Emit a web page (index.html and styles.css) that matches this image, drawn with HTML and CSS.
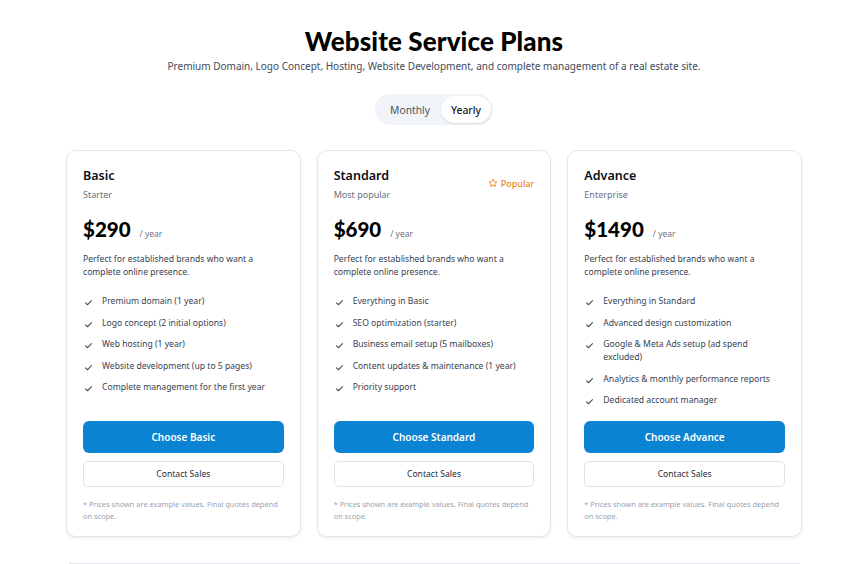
FILE: index.html
```html
<!DOCTYPE html>
<html lang="en">
<head>
<meta charset="utf-8">
<title>Website Service Plans</title>
<link rel="stylesheet" href="styles.css">
</head>
<body>
<main class="page">
  <header class="hero">
    <h1 class="title">Website Service Plans</h1>
    <p class="subtitle">Premium Domain, Logo Concept, Hosting, Website Development, and complete management of a real estate site.</p>
    <div class="toggle">
      <button class="toggle-btn">Monthly</button>
      <button class="toggle-btn active">Yearly</button>
    </div>
  </header>

  <section class="plans">
    <article class="card">
      <div class="card-head">
        <div>
          <h2 class="plan-name">Basic</h2>
          <p class="plan-tag">Starter</p>
        </div>
      </div>
      <div class="price"><span class="amount">$290</span><span class="per">/ year</span></div>
      <p class="desc">Perfect for established brands who want a complete online presence.</p>
      <ul class="features">
        <li><svg class="check" viewBox="0 0 12 12"><path d="M2 6.5l2.6 2.5L10 3.5"/></svg>Premium domain (1 year)</li>
        <li><svg class="check" viewBox="0 0 12 12"><path d="M2 6.5l2.6 2.5L10 3.5"/></svg>Logo concept (2 initial options)</li>
        <li><svg class="check" viewBox="0 0 12 12"><path d="M2 6.5l2.6 2.5L10 3.5"/></svg>Web hosting (1 year)</li>
        <li><svg class="check" viewBox="0 0 12 12"><path d="M2 6.5l2.6 2.5L10 3.5"/></svg>Website development (up to 5 pages)</li>
        <li><svg class="check" viewBox="0 0 12 12"><path d="M2 6.5l2.6 2.5L10 3.5"/></svg>Complete management for the first year</li>
      </ul>
      <div class="actions">
        <button class="btn-primary">Choose Basic</button>
        <button class="btn-secondary">Contact Sales</button>
        <p class="note">* Prices shown are example values. Final quotes depend on scope.</p>
      </div>
    </article>

    <article class="card">
      <div class="card-head">
        <div>
          <h2 class="plan-name">Standard</h2>
          <p class="plan-tag">Most popular</p>
        </div>
        <span class="badge"><svg class="star" viewBox="0 0 24 24"><path d="M12 2.8l2.8 5.9 6.4.8-4.7 4.4 1.2 6.4L12 17.2l-5.7 3.1 1.2-6.4-4.7-4.4 6.4-.8z"/></svg>Popular</span>
      </div>
      <div class="price"><span class="amount">$690</span><span class="per">/ year</span></div>
      <p class="desc">Perfect for established brands who want a complete online presence.</p>
      <ul class="features">
        <li><svg class="check" viewBox="0 0 12 12"><path d="M2 6.5l2.6 2.5L10 3.5"/></svg>Everything in Basic</li>
        <li><svg class="check" viewBox="0 0 12 12"><path d="M2 6.5l2.6 2.5L10 3.5"/></svg>SEO optimization (starter)</li>
        <li><svg class="check" viewBox="0 0 12 12"><path d="M2 6.5l2.6 2.5L10 3.5"/></svg>Business email setup (5 mailboxes)</li>
        <li><svg class="check" viewBox="0 0 12 12"><path d="M2 6.5l2.6 2.5L10 3.5"/></svg>Content updates &amp; maintenance (1 year)</li>
        <li><svg class="check" viewBox="0 0 12 12"><path d="M2 6.5l2.6 2.5L10 3.5"/></svg>Priority support</li>
      </ul>
      <div class="actions">
        <button class="btn-primary">Choose Standard</button>
        <button class="btn-secondary">Contact Sales</button>
        <p class="note">* Prices shown are example values. Final quotes depend on scope.</p>
      </div>
    </article>

    <article class="card">
      <div class="card-head">
        <div>
          <h2 class="plan-name">Advance</h2>
          <p class="plan-tag">Enterprise</p>
        </div>
      </div>
      <div class="price"><span class="amount">$1490</span><span class="per">/ year</span></div>
      <p class="desc">Perfect for established brands who want a complete online presence.</p>
      <ul class="features">
        <li><svg class="check" viewBox="0 0 12 12"><path d="M2 6.5l2.6 2.5L10 3.5"/></svg>Everything in Standard</li>
        <li><svg class="check" viewBox="0 0 12 12"><path d="M2 6.5l2.6 2.5L10 3.5"/></svg>Advanced design customization</li>
        <li><svg class="check" viewBox="0 0 12 12"><path d="M2 6.5l2.6 2.5L10 3.5"/></svg>Google &amp; Meta Ads setup (ad spend excluded)</li>
        <li><svg class="check" viewBox="0 0 12 12"><path d="M2 6.5l2.6 2.5L10 3.5"/></svg>Analytics &amp; monthly performance reports</li>
        <li><svg class="check" viewBox="0 0 12 12"><path d="M2 6.5l2.6 2.5L10 3.5"/></svg>Dedicated account manager</li>
      </ul>
      <div class="actions">
        <button class="btn-primary">Choose Advance</button>
        <button class="btn-secondary">Contact Sales</button>
        <p class="note">* Prices shown are example values. Final quotes depend on scope.</p>
      </div>
    </article>
  </section>
  <hr class="divider">
</main>
</body>
</html>
```

FILE: styles.css
```css
* { box-sizing: border-box; }
html, body { margin: 0; padding: 0; background: #ffffff; }
body {
  font-family: "Noto Sans", "Open Sans", sans-serif;
  color: #111827;
  overflow: hidden;
}
.page {
  width: 736px;
  margin: 0 auto;
  padding-top: 26px;
  transform: translateX(2px);
}
.hero {
  display: flex;
  flex-direction: column;
  align-items: center;
}
.title {
  margin: 0;
  font-family: "Lato", "Noto Sans", sans-serif;
  font-weight: 900;
  font-size: 26px;
  line-height: 30px;
  color: #000;
  letter-spacing: 0.1px;
}
.subtitle {
  margin: 3px 0 0;
  font-size: 10px;
  line-height: 14px;
  color: #3f4a5c;
}
.toggle {
  margin-top: 21px;
  display: flex;
  padding: 2px;
  background: #f1f4f8;
  border-radius: 16px;
}
.toggle-btn {
  font-family: inherit;
  border: 0;
  background: transparent;
  font-size: 10.3px;
  color: #4b5563;
  height: 27px;
  padding: 0 11px 0 13px;
  border-radius: 14px;
  cursor: pointer;
}
.toggle-btn.active {
  background: #fff;
  color: #111827;
  font-weight: 500;
  padding: 0 10px;
  box-shadow: 0 1px 2px rgba(15, 23, 42, 0.12);
}
.plans {
  margin-top: 25px;
  display: grid;
  grid-template-columns: repeat(3, 1fr);
  gap: 16px;
}
.card {
  display: flex;
  flex-direction: column;
  border: 1px solid #e2e6ee;
  border-radius: 10px;
  padding: 16px 16px 14px;
  background: #fff;
  box-shadow: 0 2px 3px rgba(15, 23, 42, 0.06);
  height: 387px;
}
.card-head {
  display: flex;
  justify-content: space-between;
  align-items: center;
}
.plan-name {
  margin: 0;
  font-size: 12.5px;
  line-height: 18px;
  font-weight: 600;
  color: #0b0f19;
}
.plan-tag {
  margin: 3px 0 0;
  font-size: 9px;
  line-height: 13px;
  color: #6b7280;
}
.badge {
  display: flex;
  align-items: center;
  gap: 3px;
  font-size: 9px;
  font-weight: 500;
  color: #e8891a;
  margin-top: -2px;
}
.star {
  width: 10px;
  height: 10px;
  fill: none;
  stroke: #e8891a;
  stroke-width: 2.2;
  stroke-linejoin: round;
}
.price {
  margin-top: 15px;
  display: flex;
  align-items: baseline;
}
.amount {
  font-family: "Lato", "Noto Sans", sans-serif;
  font-weight: 900;
  font-size: 20.5px;
  line-height: 26px;
  color: #000;
}
.per {
  margin-left: 9px;
  font-size: 8.5px;
  color: #6b7280;
}
.desc {
  margin: 11px 0 0;
  font-size: 8.6px;
  line-height: 13px;
  color: #374151;
}
.features {
  list-style: none;
  margin: 16px 0 0;
  padding: 0;
  display: flex;
  flex-direction: column;
  gap: 8.5px;
}
.features li {
  display: flex;
  align-items: flex-start;
  font-size: 8.6px;
  line-height: 13px;
  color: #374151;
}
.check {
  flex: none;
  width: 9px;
  height: 9px;
  margin: 3px 9px 0 1px;
  fill: none;
  stroke: #4b5563;
  stroke-width: 1.5;
  stroke-linecap: round;
  stroke-linejoin: round;
}
.actions {
  margin-top: auto;
  display: flex;
  flex-direction: column;
}
.btn-primary {
  font-family: inherit;
  height: 32px;
  border: 0;
  border-radius: 6px;
  background: #0b83d3;
  color: #fff;
  font-size: 10px;
  font-weight: 600;
  cursor: pointer;
}
.btn-secondary {
  font-family: inherit;
  margin-top: 8px;
  height: 26px;
  border: 1px solid #dde2ea;
  border-radius: 5px;
  background: #fff;
  color: #1f2937;
  font-size: 8.6px;
  cursor: pointer;
}
.note {
  margin: 11px 0 0;
  font-size: 7.4px;
  line-height: 12px;
  color: #9aa3b2;
}
.divider {
  margin: 26px 2px 0 3px;
  border: 0;
  border-top: 1px solid #e5e7eb;
}
```
